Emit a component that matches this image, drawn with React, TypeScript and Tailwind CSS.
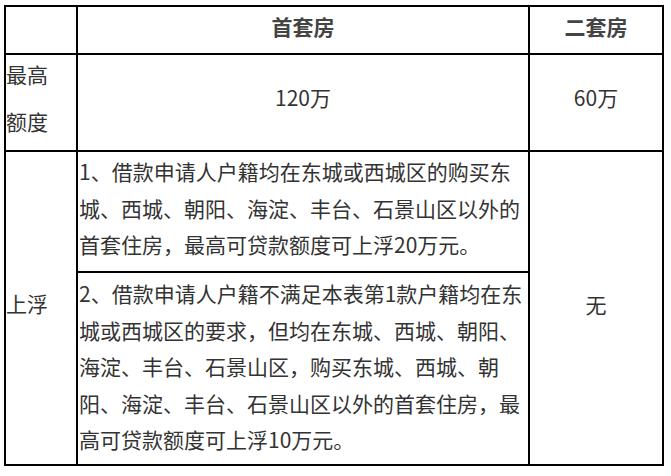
export default function App() {
  return (
    <div className="w-[671px] h-[476px] bg-white pt-[5px] pl-[4px] font-['Noto_Sans_CJK_SC','Microsoft_YaHei',sans-serif] text-[21px] text-[#333]">
      <div className="grid w-[660px] grid-cols-[70px_450px_132px] grid-rows-[46px_95px_119px_191px] gap-[2px] bg-black p-[2px]">
        {/* header */}
        <div className="bg-white" />
        <div className="flex items-center justify-center bg-white pb-[8px] font-bold leading-[36px] text-[#444]">
          首套房
        </div>
        <div className="flex items-center justify-center bg-white pb-[8px] font-bold leading-[36px] text-[#444]">
          二套房
        </div>

        {/* 最高额度 */}
        <div className="bg-white pt-[1px] leading-[36px]">
          <div>最高</div>
          <div className="mt-[11px]">额度</div>
        </div>
        <div className="flex items-center justify-center bg-white pb-[11px] leading-[36px]">
          120万
        </div>
        <div className="flex items-center justify-center bg-white pb-[11px] leading-[36px]">
          60万
        </div>

        {/* 上浮 */}
        <div className="row-span-2 flex items-center bg-white pb-[11px] leading-[36px]">
          上浮
        </div>
        <div className="bg-white pl-[1px] pt-[1px] leading-[36.5px]">
          1、借款申请人户籍均在东城或西城区的购买东城、西城、朝阳、海淀、丰台、石景山区以外的首套住房，最高可贷款额度可上浮20万元。
        </div>
        <div className="row-span-2 flex items-center justify-center bg-white pb-[8px] leading-[36px]">
          无
        </div>
        <div className="bg-white pl-[1px] pt-[2px] leading-[36.5px]">
          2、借款申请人户籍不满足本表第1款户籍均在东城或西城区的要求，但均在东城、西城、朝阳、海淀、丰台、石景山区，购买东城、西城、朝阳、海淀、丰台、石景山区以外的首套住房，最高可贷款额度可上浮10万元。
        </div>
      </div>
    </div>
  );
}
